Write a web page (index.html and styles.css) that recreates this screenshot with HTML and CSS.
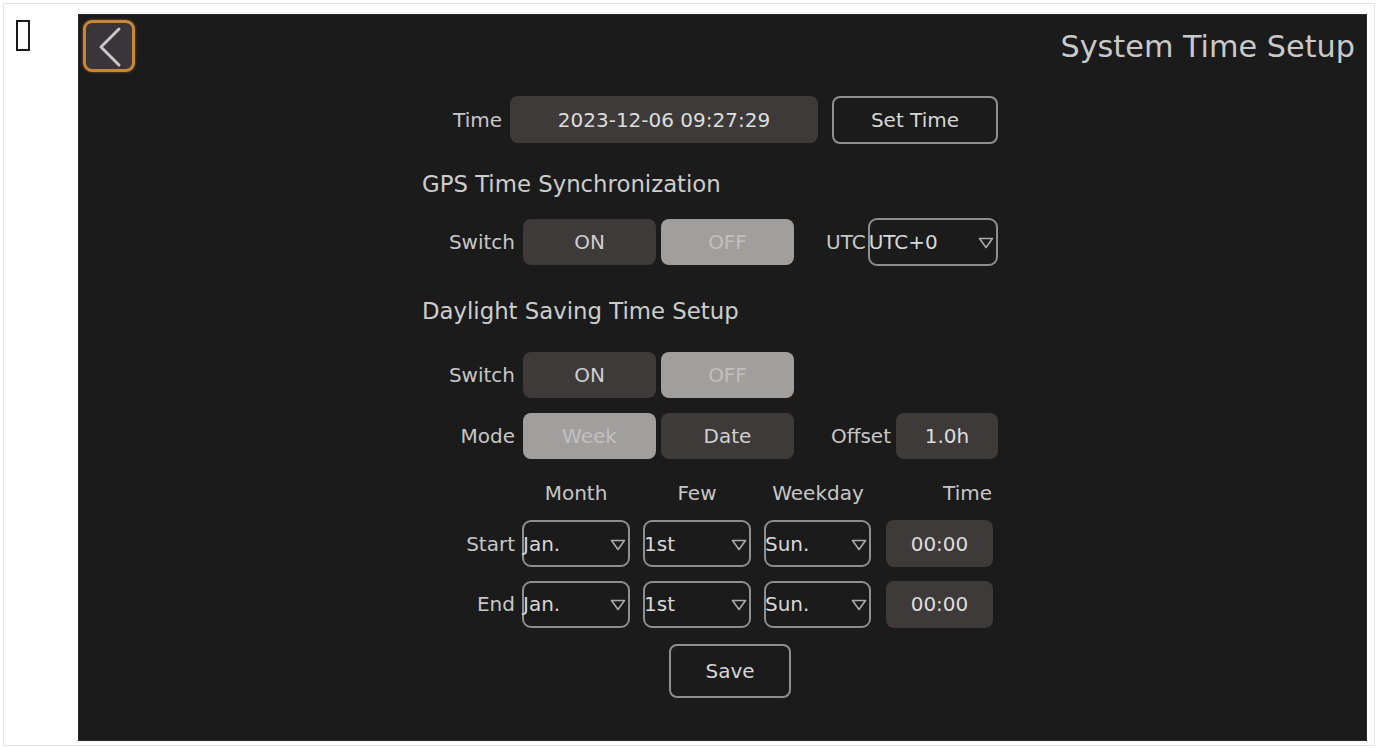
FILE: index.html
```html
<!DOCTYPE html>
<html lang="en">
<head>
<meta charset="utf-8">
<title>System Time Setup</title>
<link rel="stylesheet" href="styles.css">
</head>
<body>
<div class="frame">
  <div class="side"><span class="tofu"></span></div>
  <main class="panel">
    <header class="top">
      <button class="back" aria-label="Back">
        <svg width="46" height="46" viewBox="0 0 46 46"><polyline points="33,6 15,24 33,42" fill="none" stroke="#cbc6c6" stroke-width="3" stroke-linecap="round" stroke-linejoin="round"/></svg>
      </button>
      <h1 class="title">System Time Setup</h1>
    </header>

    <section class="form">
      <div class="row row-time">
        <span class="lbl lbl-time">Time</span>
        <div class="field field-time">2023-12-06 09:27:29</div>
        <button class="btn btn-set">Set Time</button>
      </div>

      <h2 class="heading heading-gps">GPS Time Synchronization</h2>
      <div class="row row-gps">
        <span class="lbl lbl-main">Switch</span>
        <div class="seg">ON</div>
        <div class="seg seg-light">OFF</div>
        <span class="lbl lbl-utc">UTC</span>
        <div class="select select-utc">
          <span>UTC+0</span>
          <svg class="tri" width="16" height="12" viewBox="0 0 16 12"><polygon points="1.5,1.5 14.5,1.5 8,10.5" fill="none" stroke="#a9a9a9" stroke-width="1.6" stroke-linejoin="round"/></svg>
        </div>
      </div>

      <h2 class="heading heading-dst">Daylight Saving Time Setup</h2>
      <div class="row row-dst">
        <span class="lbl lbl-main">Switch</span>
        <div class="seg">ON</div>
        <div class="seg seg-light">OFF</div>
      </div>
      <div class="row row-mode">
        <span class="lbl lbl-main">Mode</span>
        <div class="seg seg-light">Week</div>
        <div class="seg">Date</div>
        <span class="lbl lbl-offset">Offset</span>
        <div class="field field-offset">1.0h</div>
      </div>

      <div class="grid grid-head">
        <span></span>
        <span class="col-h">Month</span>
        <span class="col-h">Few</span>
        <span class="col-h">Weekday</span>
        <span class="col-h col-h-time">Time</span>
      </div>
      <div class="grid grid-start">
        <span class="lbl grid-lbl">Start</span>
        <div class="select cell"><span>Jan.</span><svg class="tri" width="16" height="12" viewBox="0 0 16 12"><polygon points="1.5,1.5 14.5,1.5 8,10.5" fill="none" stroke="#a9a9a9" stroke-width="1.6" stroke-linejoin="round"/></svg></div>
        <div class="select cell"><span>1st</span><svg class="tri" width="16" height="12" viewBox="0 0 16 12"><polygon points="1.5,1.5 14.5,1.5 8,10.5" fill="none" stroke="#a9a9a9" stroke-width="1.6" stroke-linejoin="round"/></svg></div>
        <div class="select cell cell-narrow"><span>Sun.</span><svg class="tri" width="16" height="12" viewBox="0 0 16 12"><polygon points="1.5,1.5 14.5,1.5 8,10.5" fill="none" stroke="#a9a9a9" stroke-width="1.6" stroke-linejoin="round"/></svg></div>
        <div class="field cell cell-narrow">00:00</div>
      </div>
      <div class="grid grid-end">
        <span class="lbl grid-lbl">End</span>
        <div class="select cell"><span>Jan.</span><svg class="tri" width="16" height="12" viewBox="0 0 16 12"><polygon points="1.5,1.5 14.5,1.5 8,10.5" fill="none" stroke="#a9a9a9" stroke-width="1.6" stroke-linejoin="round"/></svg></div>
        <div class="select cell"><span>1st</span><svg class="tri" width="16" height="12" viewBox="0 0 16 12"><polygon points="1.5,1.5 14.5,1.5 8,10.5" fill="none" stroke="#a9a9a9" stroke-width="1.6" stroke-linejoin="round"/></svg></div>
        <div class="select cell cell-narrow"><span>Sun.</span><svg class="tri" width="16" height="12" viewBox="0 0 16 12"><polygon points="1.5,1.5 14.5,1.5 8,10.5" fill="none" stroke="#a9a9a9" stroke-width="1.6" stroke-linejoin="round"/></svg></div>
        <div class="field cell cell-narrow">00:00</div>
      </div>

      <div class="save-row">
        <button class="btn btn-save">Save</button>
      </div>
    </section>
  </main>
</div>
</body>
</html>
```

FILE: styles.css
```css
* { box-sizing: border-box; }

html, body {
  margin: 0;
  padding: 0;
  background: #ffffff;
  font-family: "DejaVu Sans", "Liberation Sans", sans-serif;
}

.frame {
  margin: 3px;
  height: 743px;
  border: 1px solid #e4e4e4;
  display: flex;
  padding-top: 10px;
}

.side {
  width: 74px;
  flex: none;
  padding: 6px 0 0 12px;
}

.tofu {
  display: block;
  width: 14px;
  height: 31px;
  border: 2px solid #1a1a1a;
}

.panel {
  width: 1289px;
  height: 727px;
  background: #1b1b1b;
  box-shadow: inset 0 0 0 1px #2a2a2a;
  display: flex;
  flex-direction: column;
}

.top {
  display: flex;
  align-items: center;
  justify-content: space-between;
  padding: 6px 12px 0 5px;
}

.back {
  width: 52px;
  height: 52px;
  padding: 0;
  border: 3px solid #c98638;
  border-radius: 9px;
  background: #3a3538;
  box-shadow: 0 0 3px rgba(201, 134, 56, 0.6);
  display: flex;
  align-items: center;
  justify-content: center;
}

.title {
  margin: 0;
  font-weight: normal;
  font-size: 30.3px;
  color: #c9c9c9;
  line-height: 34px;
  margin-top: 2px;
}

.form {
  margin-left: 344px;
  width: 576px;
  display: flex;
  flex-direction: column;
}

.row {
  display: flex;
  align-items: center;
}

.lbl {
  font-size: 20px;
  color: #c7c7c7;
  white-space: nowrap;
}

.lbl-time { width: 80px; text-align: right; margin-right: 8px; }
.lbl-main { width: 93px; text-align: right; margin-right: 8px; }
.lbl-utc { margin-left: 32px; margin-right: 2px; }
.lbl-offset { margin-left: 37px; margin-right: 5px; }

.field {
  background: #3d3a39;
  border-radius: 8px;
  color: #dedede;
  font-size: 20px;
  display: flex;
  align-items: center;
  justify-content: center;
}

.btn {
  background: #1b1b1b;
  border: 2px solid #8f8f8f;
  border-radius: 8px;
  color: #d6d6d6;
  font-family: inherit;
  font-size: 20px;
  padding: 0;
}

.row-time { margin-top: 24px; height: 47px; }
.field-time { width: 308px; height: 47px; }
.btn-set { width: 166px; height: 48px; margin-left: 14px; }

.heading {
  margin: 0;
  font-weight: normal;
  font-size: 22.8px;
  line-height: 30px;
  color: #cdcdcd;
}

.heading-gps { margin-top: 26px; }
.row-gps { margin-top: 19px; height: 48px; }
.heading-dst { margin-top: 30px; }
.row-dst { margin-top: 26px; height: 46px; }
.row-mode { margin-top: 15px; height: 46px; }

.seg {
  width: 133px;
  height: 46px;
  border-radius: 8px;
  background: #3d3a39;
  color: #cfcfcf;
  font-size: 20px;
  display: flex;
  align-items: center;
  justify-content: center;
}

.seg + .seg { margin-left: 5px; }

.seg-light {
  background: #a19f9e;
  color: #c2c0bf;
}

.select {
  border: 2px solid #8e8e8e;
  border-radius: 9px;
  color: #d8d8d8;
  font-size: 20px;
  display: flex;
  align-items: center;
  justify-content: space-between;
  padding: 0 2px 0 0;
}

.select > span { margin-left: -1px; }

.select-utc { width: 130px; height: 48px; }

.tri { flex: none; margin-top: 2px; }

.field-offset { width: 102px; height: 46px; }

.grid {
  display: grid;
  grid-template-columns: 100px 121px 121px 122px 107px;
  align-items: center;
}

.grid-head { margin-top: 21px; height: 26px; }
.grid-start { margin-top: 14px; height: 47px; }
.grid-end { margin-top: 13px; height: 48px; }

.col-h {
  width: 108px;
  text-align: center;
  font-size: 20px;
  color: #c7c7c7;
}

.col-h-time { width: 106px; text-align: right; }

.grid-lbl { text-align: right; padding-right: 7px; }

.cell { width: 108px; height: 47px; }
.cell-narrow { width: 107px; }

.save-row {
  margin-top: 16px;
  padding-left: 247px;
}

.btn-save { width: 122px; height: 54px; }
```
